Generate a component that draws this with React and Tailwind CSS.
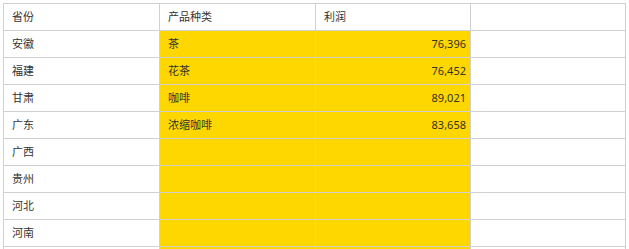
import React from "react";

// pivot-style grid: province | product | profit | (empty)
const rows = [
  { province: "安徽", product: "茶", profit: "76,396" },
  { province: "福建", product: "花茶", profit: "76,452" },
  { province: "甘肃", product: "咖啡", profit: "89,021" },
  { province: "广东", product: "浓缩咖啡", profit: "83,658" },
  { province: "广西" },
  { province: "贵州" },
  { province: "河北" },
  { province: "河南" },
  { province: "" },
];

const cell = "border-r border-b border-[#d0d0d0] h-[27px] flex items-center px-2 whitespace-nowrap overflow-hidden";

export default function App() {
  return (
    <div
      className="h-screen overflow-hidden bg-white pt-[3px] pl-[3px] text-[11px] text-[#333]"
      style={{ fontFamily: "'Noto Sans', 'Noto Sans CJK SC', sans-serif" }}
    >
      <div className="grid grid-cols-[156px_156px_155px_155px] border-l border-t border-[#d0d0d0] w-fit">
        <div className={cell}>省份</div>
        <div className={cell}>产品种类</div>
        <div className={cell}>利润</div>
        <div className={cell}></div>

        {rows.map((r, i) => (
          <React.Fragment key={i}>
            <div className={cell}>{r.province}</div>
            <div className={`${cell} bg-[#ffd700]`}>{r.product || ""}</div>
            <div className={`${cell} bg-[#ffd700] justify-end pr-1`}>{r.profit || ""}</div>
            <div className={cell}></div>
          </React.Fragment>
        ))}
      </div>
    </div>
  );
}
